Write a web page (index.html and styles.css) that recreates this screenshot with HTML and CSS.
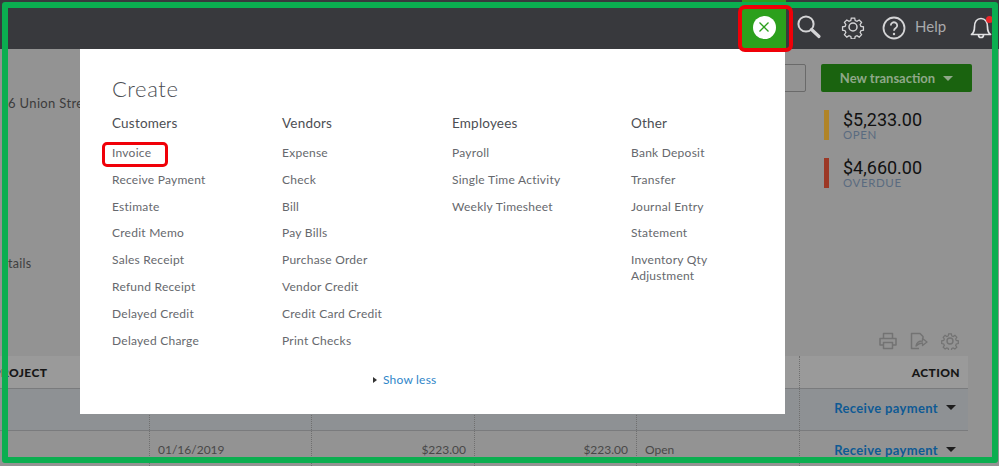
FILE: index.html
```
<!DOCTYPE html>
<html lang="en">
<head>
<meta charset="utf-8">
<title>Create menu</title>
<link rel="stylesheet" href="styles.css">
</head>
<body>
<div class="app">
  <header class="topbar">
    <div class="plus-tile"><span class="plus-circle"><svg width="12" height="12" viewBox="0 0 12 12"><path d="M1.5 1.5l9 9M10.5 1.5l-9 9" stroke="#2ca01c" stroke-width="1.3" fill="none"/></svg></span></div>
    <svg class="tb-icon search" width="26" height="26" viewBox="0 0 26 26"><circle cx="10" cy="10" r="7.6" fill="none" stroke="#d4d4d6" stroke-width="2"/><path d="M15.5 15.5l7.5 7" stroke="#d4d4d6" stroke-width="3.2" stroke-linecap="round"/></svg>
    <svg class="tb-icon gear" width="24" height="24" viewBox="0 0 24 24"><path d="M10 1.500h4l.6 3 2.100.9 2.600-1.700 2.800 2.800-1.700 2.600.9 2.100 3 .6v4l-3 .6-.9 2.100 1.700 2.600-2.800 2.800-2.600-1.700-2.100.9-.6 3h-4l-.6-3-2.100-.9-2.600 1.700-2.800-2.800 1.700-2.600-.9-2.100-3-.6v-4l3-.6.9-2.100-1.700-2.600 2.800-2.800 2.600 1.700 2.100-.9z" fill="none" stroke="#d4d4d6" stroke-width="1.500" transform="translate(1.800 1.800) scale(.85)"/><circle cx="12" cy="12" r="4" fill="none" stroke="#d4d4d6" stroke-width="1.500"/></svg>
    <svg class="tb-icon help-ic" width="24" height="24" viewBox="0 0 24 24"><circle cx="12" cy="12" r="10.500" fill="none" stroke="#d4d4d6" stroke-width="1.800"/><path d="M8.800 9.500a3.200 3.200 0 1 1 5 2.600c-1.200.8-1.800 1.300-1.800 2.700" fill="none" stroke="#d4d4d6" stroke-width="1.800"/><circle cx="12" cy="18" r="1.200" fill="#d4d4d6"/></svg>
    <span class="help-label">Help</span>
    <span class="bell-wrap">
      <svg width="24" height="24" viewBox="0 0 24 24"><path d="M2.500 19.500c2-1.500 3-3.500 3-7.500 0-5 2.500-8.500 6.500-8.500s6.500 3.500 6.500 8.500c0 4 1 6 3 7.500z" fill="none" stroke="#e2e2e4" stroke-width="1.700" stroke-linejoin="round"/><path d="M9.500 20a2.500 2.500 0 0 0 5 0" fill="none" stroke="#e2e2e4" stroke-width="1.700"/></svg>
      <span class="bell-dot"></span>
    </span>
  </header>

  <main class="page">
    <section class="summary">
      <div class="address-col">
        <p class="address">6 Union Street</p>
        <p class="details">tails</p>
      </div>
      <div class="summary-right">
        <div class="actions-row">
          <span class="edit-box"></span>
          <span class="new-btn">New transaction <i class="caret light"></i></span>
        </div>
        <div class="stat"><span class="bar yellow"></span><div><div class="amount">$5,233.00</div><div class="stat-label">OPEN</div></div></div>
        <div class="stat"><span class="bar red"></span><div><div class="amount">$4,660.00</div><div class="stat-label">OVERDUE</div></div></div>
      </div>
    </section>

    <div class="tools">
      <svg width="18" height="18" viewBox="0 0 18 18"><path d="M4.500 6V1.500h9V6M4 13H1V6.500h16V13h-3M4.500 10.500h9v6h-9z" fill="none" stroke="#737373" stroke-width="1.500" stroke-linejoin="round"/></svg>
      <svg width="18" height="18" viewBox="0 0 18 18"><path d="M9 16.500H1.500V1.500H10l3 3v2" fill="none" stroke="#737373" stroke-width="1.500" stroke-linejoin="round"/><path d="M6 14c.5-3.500 3-5 6.500-5V6.500L17 10l-4.500 3.500V11c-2.500 0-4.500 1-6.500 3z" fill="none" stroke="#737373" stroke-width="1.300" stroke-linejoin="round"/></svg>
      <svg width="18" height="18" viewBox="0 0 24 24"><path d="M10 1.500h4l.6 3 2.100.9 2.600-1.700 2.800 2.800-1.700 2.600.9 2.100 3 .6v4l-3 .6-.9 2.100 1.700 2.600-2.800 2.800-2.600-1.700-2.100.9-.6 3h-4l-.6-3-2.100-.9-2.600 1.700-2.800-2.800 1.700-2.600-.9-2.100-3-.6v-4l3-.6.9-2.100-1.700-2.600 2.800-2.800 2.600 1.700 2.100-.9z" fill="none" stroke="#737373" stroke-width="1.800" transform="translate(1.200 1.200) scale(.9)"/><circle cx="12" cy="12" r="4" fill="none" stroke="#737373" stroke-width="1.800"/></svg>
    </div>

    <div class="table">
      <div class="row head">
        <div class="cell project">PROJECT</div><div class="cell"></div><div class="cell"></div><div class="cell"></div><div class="cell"></div><div class="cell action">ACTION</div>
      </div>
      <div class="row tinted">
        <div class="cell"></div><div class="cell"></div><div class="cell"></div><div class="cell"></div><div class="cell"></div><div class="cell action"><span class="link">Receive payment</span><i class="caret"></i></div>
      </div>
      <div class="row">
        <div class="cell"></div><div class="cell">01/16/2019</div><div class="cell right">$223.00</div><div class="cell right">$223.00</div><div class="cell">Open</div><div class="cell action"><span class="link">Receive payment</span><i class="caret"></i></div>
      </div>
    </div>
  </main>

  <div class="modal">
    <h1 class="modal-title">Create</h1>
    <div class="modal-cols">
      <div class="col col-a">
        <h2>Customers</h2>
        <a>Invoice</a><a>Receive Payment</a><a>Estimate</a><a>Credit Memo</a><a>Sales Receipt</a><a>Refund Receipt</a><a>Delayed Credit</a><a>Delayed Charge</a>
      </div>
      <div class="col col-b">
        <h2>Vendors</h2>
        <a>Expense</a><a>Check</a><a>Bill</a><a>Pay Bills</a><a>Purchase Order</a><a>Vendor Credit</a><a>Credit Card Credit</a><a>Print Checks</a>
      </div>
      <div class="col col-c">
        <h2>Employees</h2>
        <a>Payroll</a><a>Single Time Activity</a><a>Weekly Timesheet</a>
      </div>
      <div class="col col-d">
        <h2>Other</h2>
        <a>Bank Deposit</a><a>Transfer</a><a>Journal Entry</a><a>Statement</a><a class="two-line">Inventory Qty Adjustment</a>
      </div>
    </div>
    <div class="show-less"><i class="tri"></i><span>Show less</span></div>
  </div>

  <div class="mark frame"></div>
  <div class="mark red-plus"></div>
  <div class="mark red-invoice"></div>
</div>
</body>
</html>
```
FILE: styles.css
```
* { box-sizing: border-box; }
html, body { margin: 0; padding: 0; background: #f2f2f2; }
body { font-family: Lato, "Open Sans", sans-serif; }
.app { position: relative; width: 999px; height: 466px; overflow: hidden; background: #939393; }

.topbar { height: 49px; background: #38393d; display: flex; align-items: center; padding-left: 742px; }
.plus-tile { width: 44px; height: 49px; background: #2ca01c; display: flex; align-items: center; justify-content: center; flex: none; }
.plus-circle { width: 23px; height: 23px; border-radius: 50%; background: #fff; display: flex; align-items: center; justify-content: center; margin-top: 5px; }
.tb-icon { flex: none; display: block; }
.search { margin-left: 10px; margin-top: 4px; }
.gear { margin-left: 19px; margin-top: 5px; }
.help-ic { margin-left: 17px; margin-top: 6px; }
.help-label { margin-left: 9px; margin-top: 3px; font-size: 15px; color: #a9aaac; }
.bell-wrap { position: relative; margin-left: 23px; margin-top: 5px; width: 24px; height: 24px; flex: none; }
.bell-dot { position: absolute; right: 0; top: 1px; width: 7px; height: 7px; border-radius: 50%; background: #e8262a; }

.page { display: flex; flex-direction: column; }
.summary { height: 280px; display: flex; justify-content: space-between; }
.address-col { padding-left: 8px; }
.address { margin: 46px 0 0; font-size: 13px; color: #3c3c3c; white-space: nowrap; letter-spacing: .35px; }
.details { margin: 145px 0 0; font-size: 12.500px; color: #3f3f3f; letter-spacing: .3px; }
.summary-right { width: 224px; padding-top: 15px; }
.actions-row { display: flex; gap: 15px; height: 28px; margin-left: -11px; }
.edit-box { width: 42px; height: 28px; border: 1px solid #6a6a6a; border-radius: 2px; flex: none; }
.new-btn { width: 151px; height: 28px; background: #1a630f; border-radius: 2px; color: #8fa889; font-weight: 700; font-size: 13px; display: flex; align-items: center; justify-content: center; gap: 8px; flex: none; }
.stat { display: flex; gap: 14px; margin: 18px 0 0 49px; height: 30px; }
.bar { width: 5px; height: 30px; flex: none; }
.yellow { background: #b08428; }
.red { background: #9c3826; }
.amount { font-family: Roboto, sans-serif; font-size: 18px; line-height: 20px; color: #111; font-weight: 400; }
.stat-label { font-size: 11.500px; line-height: 9px; letter-spacing: .6px; color: #5a6b80; }

.caret { display: inline-block; width: 0; height: 0; border-left: 5px solid transparent; border-right: 5px solid transparent; border-top: 5px solid #1d1d1d; margin-left: 8px; }
.caret.light { border-top-color: #8fa889; margin-left: 0; }

.tools { height: 27px; padding: 0 40px 3px 0; display: flex; justify-content: flex-end; align-items: center; gap: 13px; }
.table { width: 968px; }
.row { display: grid; grid-template-columns: 150px 162px 163px 162px 163px 168px; height: 42px; border-bottom: 1px solid #7a7b7d; background: #939393; font-size: 12px; color: #484848; }
.row.head { height: 33px; background: #9a9a9a; font-weight: 900; color: #161616; letter-spacing: .4px; }
.row.tinted { background: #8e9194; }
.cell { border-right: 1px dotted #6f6f6f; padding: 0 8px; display: flex; align-items: center; }
.row:not(.head) .cell { padding-bottom: 4px; }
.cell:last-child { border-right: 0; }
.right { justify-content: flex-end; }
.project { margin-left: -15px; }
.action { justify-content: flex-end; padding-right: 12px; }
.row.head .action { padding-right: 8px; }
.link { color: #0e5a94; font-weight: 700; font-size: 13px; letter-spacing: .35px; }

.modal { position: absolute; left: 80px; top: 49px; width: 705px; height: 365px; background: #fff; padding: 25px 0 0 32px; color: #66686d; }
.modal-title { margin: 0; font-size: 22px; font-weight: 300; line-height: 30px; color: #4b4d52; letter-spacing: .6px; }
.modal-cols { display: flex; margin-top: 10px; }
.col { display: flex; flex-direction: column; flex: none; }
.col-a, .col-b { width: 170px; }
.col-c { width: 179px; }
.col-d { width: 90px; }
.col h2 { margin: 0 0 8px; font-size: 13.500px; line-height: 18px; font-weight: 400; color: #4c4e53; letter-spacing: .2px; }
.col a { display: block; font-size: 12px; line-height: 16px; padding: 5px 0 5.800px; letter-spacing: .25px; white-space: nowrap; }
.col a.two-line { white-space: normal; width: 90px; }
.show-less { position: absolute; left: 293px; top: 323px; display: flex; align-items: center; gap: 6px; color: #2f86c9; font-size: 12px; letter-spacing: .2px; }
.tri { width: 0; height: 0; border-top: 3.500px solid transparent; border-bottom: 3.500px solid transparent; border-left: 4px solid #333; }

.mark { position: absolute; pointer-events: none; }
.frame { left: 2px; top: 2px; width: 996px; height: 461px; border: 6px solid #0bae50; border-radius: 3px; }
.red-plus { left: 738px; top: 5px; width: 55px; height: 47px; border: 4px solid #f00008; border-radius: 7px; }
.red-invoice { left: 102px; top: 142px; width: 66px; height: 25px; border: 3.500px solid #f00008; border-radius: 5px; }
```
